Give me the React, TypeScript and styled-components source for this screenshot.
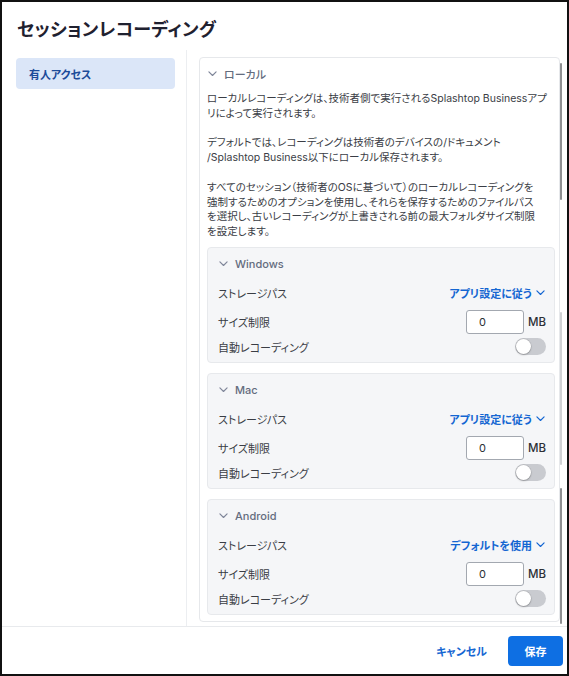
import React, { useState } from 'react';
import styled, { createGlobalStyle } from 'styled-components';

const GlobalStyle = createGlobalStyle`
  html, body {
    margin: 0;
    padding: 0;
    background: #ffffff;
  }
  body {
    font-family: Inter, "Noto Sans CJK JP", sans-serif;
    font-feature-settings: "palt";
    color: #3a3d45;
  }
  * {
    box-sizing: border-box;
  }
`;

const Frame = styled.div`
  position: relative;
  width: 569px;
  height: 676px;
  border: 2px solid #111;
  background: #fff;
  display: flex;
  flex-direction: column;
`;

const TitleBar = styled.header`
  height: 48px;
  padding: 4px 0 0 15px;
  display: flex;
  align-items: center;
`;

const Title = styled.h1`
  margin: 0;
  font-size: 18px;
  font-weight: 700;
  color: #1f2130;
  letter-spacing: 0.3px;
`;

const Body = styled.div`
  flex: 1;
  display: flex;
  min-height: 0;
`;

const Sidebar = styled.nav`
  flex: 0 0 185px;
  padding: 8px 11px 0 14px;
  border-right: 1px solid #eceef1;
`;

const NavItem = styled.div<{ $active?: boolean }>`
  height: 31px;
  padding-left: 13px;
  display: flex;
  align-items: center;
  border-radius: 4px;
  font-size: 11px;
  font-weight: 700;
  background: ${(p) => (p.$active ? '#dbe6f8' : 'transparent')};
  color: ${(p) => (p.$active ? '#1c4b99' : '#3a3d45')};
`;

const Content = styled.main`
  position: relative;
  flex: 1;
  min-width: 0;
  min-height: 0;
  padding: 7px 7px 4px 12px;
`;

const ScrollThumb = styled.div<{ $top: number; $height: number; $light?: boolean }>`
  position: absolute;
  right: 5px;
  top: ${(p) => p.$top}px;
  height: ${(p) => p.$height}px;
  width: 2px;
  border-radius: 1px;
  background: ${(p) => (p.$light ? '#cfd1d4' : '#8e8f92')};
`;

const Panel = styled.section`
  height: 100%;
  border: 1px solid #e6e8eb;
  border-radius: 4px;
  padding: 7px 4px 7px 7px;
  overflow: hidden;
`;

const SectionHeader = styled.div`
  height: 18px;
  display: flex;
  align-items: center;
  gap: 7px;
  padding-left: 1px;
  font-size: 11px;
  font-weight: 500;
  color: #646c7e;
`;

const Description = styled.div`
  margin: 9px 4px 7px 0;
  font-size: 10.5px;
  line-height: 14.8px;
  color: #3a3d45;
`;

const Paragraph = styled.p`
  margin: 0 0 14.8px;
  &:last-child {
    margin-bottom: 0;
  }
`;

const Line = styled.span`
  display: block;
  white-space: nowrap;
`;

const PlatformCard = styled.div`
  background: #f5f6f8;
  border: 1px solid #e7e9ec;
  border-radius: 4px;
  padding: 7px 8px 5px 10px;
  margin-bottom: 10px;
  &:last-child {
    margin-bottom: 0;
  }
`;

const SettingRow = styled.div<{ $h: number; $gap?: number }>`
  height: ${(p) => p.$h}px;
  margin-top: ${(p) => p.$gap ?? 0}px;
  display: flex;
  align-items: center;
  justify-content: space-between;
`;

const Label = styled.span`
  font-size: 11px;
  color: #3a3d45;
`;

const PathSelect = styled.button`
  border: 0;
  background: none;
  padding: 0 1px 0 0;
  display: flex;
  align-items: center;
  gap: 4px;
  font-family: inherit;
  font-feature-settings: "palt";
  font-size: 11px;
  font-weight: 700;
  color: #1466d2;
  cursor: pointer;
`;

const SizeField = styled.div`
  display: flex;
  align-items: center;
  gap: 4px;
`;

const SizeInput = styled.input`
  width: 58px;
  height: 24px;
  border: 1px solid #a3a8b0;
  border-radius: 3px;
  padding: 0 0 0 12px;
  font-family: inherit;
  font-size: 11px;
  color: #2c2f36;
  background: #fff;
  outline: none;
`;

const Unit = styled.span`
  font-size: 11.5px;
  font-weight: 500;
  color: #2c2f36;
`;

const Track = styled.button<{ $on: boolean }>`
  position: relative;
  width: 31px;
  height: 17px;
  border: 0;
  padding: 0;
  border-radius: 9px;
  background: ${(p) => (p.$on ? '#0e6fe3' : '#c9cbd0')};
  cursor: pointer;
`;

const Knob = styled.span<{ $on: boolean }>`
  position: absolute;
  top: 1px;
  left: ${(p) => (p.$on ? '15px' : '1px')};
  width: 15px;
  height: 15px;
  border-radius: 50%;
  background: #fff;
  box-shadow: 0 0 0 0.5px rgba(0, 0, 0, 0.12), 0 1px 2px rgba(0, 0, 0, 0.22);
  transition: left 0.15s;
`;

const Footer = styled.footer`
  height: 48px;
  border-top: 1px solid #e8eaed;
  display: flex;
  align-items: center;
  justify-content: flex-end;
  gap: 9px;
  padding-right: 4px;
`;

const CancelButton = styled.button`
  height: 30px;
  padding: 0 12px;
  border: 0;
  background: none;
  font-family: inherit;
  font-feature-settings: "palt";
  font-size: 11px;
  font-weight: 700;
  color: #1466d2;
  cursor: pointer;
`;

const SaveButton = styled.button`
  width: 55px;
  height: 30px;
  border: 0;
  border-radius: 4px;
  background: #0e6fe3;
  color: #fff;
  font-family: inherit;
  font-feature-settings: "palt";
  font-size: 11px;
  font-weight: 700;
  cursor: pointer;
`;

const Chevron: React.FC<{ color?: string; size?: number }> = ({ color = '#80879a', size = 9 }) => (
  <svg width={size} height={size * 0.6} viewBox="0 0 10 6" fill="none">
    <path d="M1 1l4 4 4-4" stroke={color} strokeWidth="1.3" strokeLinecap="round" strokeLinejoin="round" />
  </svg>
);

type Platform = { name: string; path: string };

const platforms: Platform[] = [
  { name: 'Windows', path: 'アプリ設定に従う' },
  { name: 'Mac', path: 'アプリ設定に従う' },
  { name: 'Android', path: 'デフォルトを使用' },
];

const description: string[][] = [
  ['ローカルレコーディングは、技術者側で実行されるSplashtop Businessアプ', 'リによって実行されます。'],
  ['デフォルトでは、レコーディングは技術者のデバイスの/ドキュメント', '/Splashtop Business以下にローカル保存されます。'],
  [
    'すべてのセッション（技術者のOSに基づいて）のローカルレコーディングを',
    '強制するためのオプションを使用し、それらを保存するためのファイルパス',
    'を選択し、古いレコーディングが上書きされる前の最大フォルダサイズ制限',
    'を設定します。',
  ],
];

const Toggle: React.FC = () => {
  const [on, setOn] = useState(false);
  return (
    <Track $on={on} onClick={() => setOn(!on)} aria-pressed={on}>
      <Knob $on={on} />
    </Track>
  );
};

const PlatformSettings: React.FC<{ platform: Platform }> = ({ platform }) => {
  const [size, setSize] = useState('0');
  return (
    <PlatformCard>
      <SectionHeader>
        <Chevron />
        {platform.name}
      </SectionHeader>
      <SettingRow $h={24} $gap={8}>
        <Label>ストレージパス</Label>
        <PathSelect>
          {platform.path}
          <Chevron color="#1466d2" size={9} />
        </PathSelect>
      </SettingRow>
      <SettingRow $h={26} $gap={4}>
        <Label>サイズ制限</Label>
        <SizeField>
          <SizeInput value={size} onChange={(e) => setSize(e.target.value)} />
          <Unit>MB</Unit>
        </SizeField>
      </SettingRow>
      <SettingRow $h={20} $gap={2}>
        <Label>自動レコーディング</Label>
        <Toggle />
      </SettingRow>
    </PlatformCard>
  );
};

const App: React.FC = () => {
  return (
    <Frame>
      <GlobalStyle />
      <TitleBar>
        <Title>セッションレコーディング</Title>
      </TitleBar>
      <Body>
        <Sidebar>
          <NavItem $active>有人アクセス</NavItem>
        </Sidebar>
        <Content>
          <Panel>
            <SectionHeader>
              <Chevron />
              ローカル
            </SectionHeader>
            <Description>
              {description.map((lines, i) => (
                <Paragraph key={i}>
                  {lines.map((line) => (
                    <Line key={line}>{line}</Line>
                  ))}
                </Paragraph>
              ))}
            </Description>
            {platforms.map((p) => (
              <PlatformSettings key={p.name} platform={p} />
            ))}
          </Panel>
          <ScrollThumb $top={13} $height={137} />
          <ScrollThumb $top={262} $height={153} $light />
          <ScrollThumb $top={438} $height={136} />
        </Content>
      </Body>
      <Footer>
        <CancelButton>キャンセル</CancelButton>
        <SaveButton>保存</SaveButton>
      </Footer>
    </Frame>
  );
};

export default App;
